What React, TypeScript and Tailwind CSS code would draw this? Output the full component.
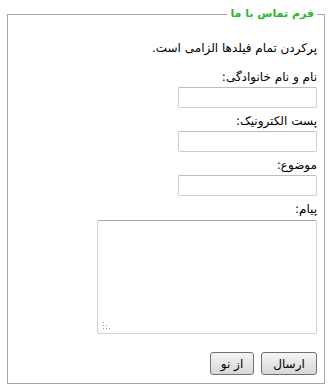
import React from 'react'

function Field({ label }: { label: string }) {
  return (
    <div className="mb-[5px]">
      <div className="h-4 leading-4">{label}</div>
      <input
        type="text"
        className="mt-[2px] h-[21px] w-[139px] rounded-[2px] border border-[#cdcdcd] border-t-[#bdbdbd] bg-white outline-none"
      />
    </div>
  )
}

export default function App() {
  return (
    <div
      dir="rtl"
      className="h-[392px] w-[334px] bg-white pt-[6px] text-[12px] text-black"
      style={{ fontFamily: '"DejaVu Sans", Tahoma, sans-serif' }}
    >
      <fieldset className="mr-[9px] ml-[7px] h-[378px] border border-[#a6a6a6] pr-[7px] pl-2">
        <legend className="px-[3px] text-[11px] leading-4 font-bold text-[#2db52d]">
          فرم تماس با ما
        </legend>

        <p className="mt-[18px] h-4 leading-4">پرکردن تمام فیلدها الزامی است.</p>

        <div className="mt-[13px]">
          <Field label="نام و نام خانوادگی:" />
          <Field label="پست الکترونیک:" />
          <Field label="موضوع:" />
          <div>
            <div className="h-4 leading-4">پیام:</div>
            <div className="relative mt-[3px] h-[114px] w-[220px]">
              <textarea className="h-full w-full resize-none rounded-[2px] border border-[#d2d2d2] border-t-[#a9a9a9] bg-white outline-none" />
              <svg className="absolute bottom-[4px] left-[6px]" width="8" height="8" viewBox="0 0 8 8">
                <g fill="#9a9a9a">
                  <rect x="0" y="0" width="1" height="1" />
                  <rect x="0" y="3" width="1" height="1" />
                  <rect x="3" y="3" width="1" height="1" />
                  <rect x="0" y="6" width="1" height="1" />
                  <rect x="3" y="6" width="1" height="1" />
                  <rect x="6" y="6" width="1" height="1" />
                </g>
              </svg>
            </div>
          </div>
        </div>

        <div className="mt-[18px] flex gap-[7px]">
          <button className="h-[23px] w-[56px] rounded-[3px] border border-[#707070] bg-gradient-to-b from-[#f6f6f6] to-[#d6d6d6] text-[12px]">
            ارسال
          </button>
          <button className="h-[23px] w-[44px] rounded-[3px] border border-[#707070] bg-gradient-to-b from-[#f6f6f6] to-[#d6d6d6] text-[12px]">
            از نو
          </button>
        </div>
      </fieldset>
    </div>
  )
}
